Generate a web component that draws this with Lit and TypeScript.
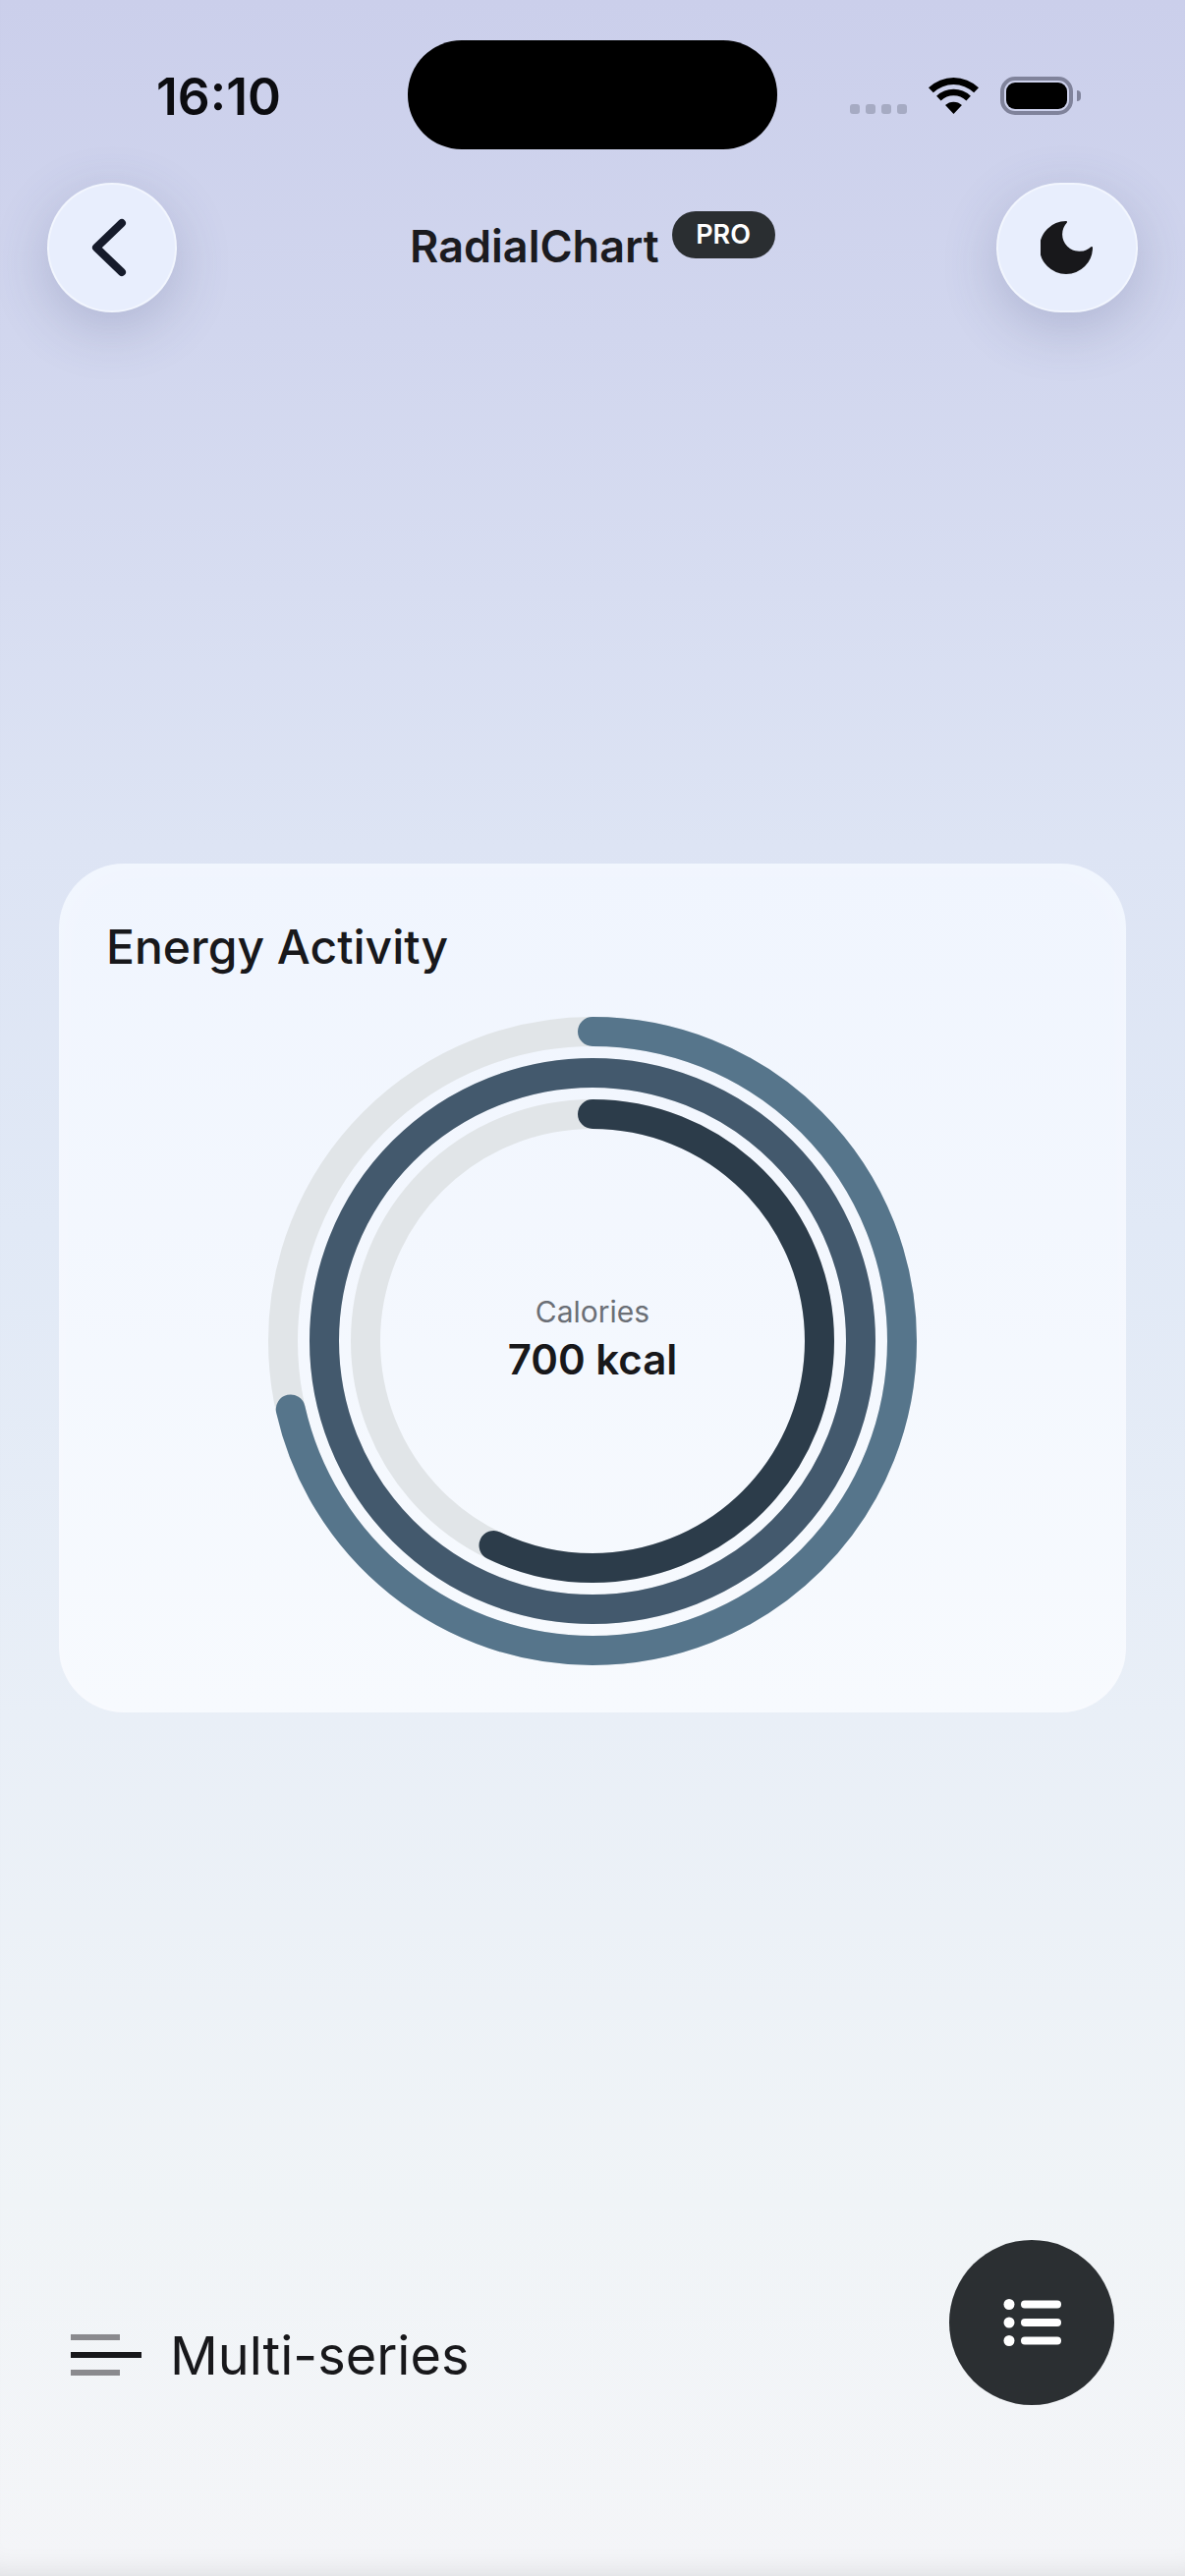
import { LitElement, html, css, svg } from "lit";
import { customElement } from "lit/decorators.js";

const CENTER = 330;
const STROKE = 30;
const TWO_PI = Math.PI * 2;

interface Ring {
  radius: number;
  fraction: number;
  color: string;
}

const RINGS: Ring[] = [
  { radius: 315, fraction: 5 / 7, color: "#56758b" },
  { radius: 273, fraction: 1, color: "#43596d" },
  { radius: 231, fraction: 4 / 7, color: "#2c3c4a" },
];

function ring(r: Ring) {
  const c = TWO_PI * r.radius;
  return svg`
    <circle class="track" cx=${CENTER} cy=${CENTER} r=${r.radius} stroke-width=${STROKE}></circle>
    <circle
      class="value"
      cx=${CENTER}
      cy=${CENTER}
      r=${r.radius}
      stroke=${r.color}
      stroke-width=${STROKE}
      stroke-dasharray="${c * r.fraction} ${c}"
      transform="rotate(-90 ${CENTER} ${CENTER})"
    ></circle>
  `;
}

@customElement("app-root")
export class AppRoot extends LitElement {
  static styles = css`
    :host {
      display: block;
      width: 1206px;
      font-family: Inter, "Liberation Sans", sans-serif;
      color: #18181b;
    }
    .page {
      width: 1206px;
      height: 2622px;
      overflow: hidden;
      display: flex;
      flex-direction: column;
      background: linear-gradient(
        180deg,
        #cbcfeb 0,
        #d1d6ee 340px,
        #dde4f4 860px,
        #e1e9f6 1250px,
        #e9eff7 1750px,
        #f0f4f7 2240px,
        #f4f5f8 2622px
      );
      box-shadow: inset 0 -26px 30px -26px rgba(0, 0, 0, 0.12);
    }

    /* status bar */
    .status {
      display: flex;
      height: 111px;
      margin-top: 41px;
      padding-left: 159px;
    }
    .time {
      width: 256px;
      font-size: 51.5px;
      font-weight: 600;
      line-height: 36px;
      padding-top: 39px;
      color: #0c0c10;
    }
    .island {
      width: 376px;
      height: 111px;
      border-radius: 55px;
      background: #000;
    }
    .signal {
      display: flex;
      gap: 6px;
      margin: 65px 0 0 74px;
      height: 10px;
    }
    .signal i {
      width: 10px;
      height: 10px;
      border-radius: 3px;
      background: #a6abc3;
    }
    .wifi {
      width: 51px;
      height: 37px;
      margin: 38px 0 0 22px;
    }
    .battery {
      display: flex;
      align-items: center;
      gap: 4px;
      margin: 37px 0 0 22px;
      height: 39px;
    }
    .shell {
      box-sizing: border-box;
      width: 74px;
      height: 39px;
      padding: 2px;
      border: 4px solid #80839b;
      border-radius: 15px;
    }
    .shell b {
      display: block;
      height: 100%;
      border-radius: 9px;
      background: #000;
    }
    .cap {
      width: 4px;
      height: 11px;
      border-radius: 0 6px 6px 0;
      background: #80839b;
    }

    /* header */
    .header {
      display: flex;
      align-items: flex-start;
      height: 132px;
      margin-top: 34px;
      padding: 0 48px;
    }
    .round {
      box-sizing: border-box;
      flex: none;
      display: flex;
      align-items: center;
      justify-content: center;
      height: 132px;
      border: 2px solid rgba(255, 255, 255, 0.45);
      border-radius: 66px;
      background: #e8eefd;
      box-shadow: 0 16px 56px rgba(70, 80, 125, 0.24);
    }
    .back {
      width: 132px;
    }
    .back svg {
      width: 44px;
      height: 60px;
      margin-right: 6px;
    }
    .moon {
      width: 144px;
    }
    .moon svg {
      width: 54px;
      height: 56px;
    }
    .title-group {
      display: flex;
      flex: 1;
      align-items: flex-start;
      padding-left: 237px;
    }
    .title {
      font-size: 45px;
      font-weight: 600;
      line-height: 54px;
      margin-top: 38px;
      color: #1b1b1f;
    }
    .pro {
      box-sizing: border-box;
      width: 105px;
      height: 48px;
      margin: 29px 0 0 13px;
      border-radius: 24px;
      background: #2a2e31;
      color: #fff;
      font-size: 27px;
      font-weight: 600;
      line-height: 48px;
      text-align: center;
    }

    /* card */
    .card {
      box-sizing: border-box;
      height: 864px;
      margin: 561px 60px 0;
      padding-top: 53px;
      border-radius: 66px;
      background: linear-gradient(180deg, #f0f5fe, #f7fafe);
      box-shadow: inset 0 0 50px rgba(255, 255, 255, 0.22);
    }
    .card h2 {
      margin: 0 0 0 48px;
      font-size: 48px;
      font-weight: 450;
      line-height: 64px;
      color: #18181b;
    }
    .chart {
      position: relative;
      width: 660px;
      height: 660px;
      margin: 39px auto 0;
    }
    .chart svg {
      display: block;
      width: 660px;
      height: 660px;
    }
    .track {
      fill: none;
      stroke: #e1e5e8;
    }
    .value {
      fill: none;
      stroke-linecap: round;
    }
    .center {
      position: absolute;
      inset: 0 0 4px;
      display: flex;
      flex-direction: column;
      align-items: center;
      justify-content: center;
      gap: 6px;
    }
    .center span {
      font-size: 30px;
      line-height: 36px;
      color: #6b6f76;
    }
    .center strong {
      font-size: 42px;
      font-weight: 600;
      line-height: 50px;
      color: #18181b;
    }

    /* footer */
    .footer {
      display: flex;
      justify-content: space-between;
      align-items: flex-start;
      margin-top: 537px;
      padding: 0 72px;
    }
    .legend {
      display: flex;
      align-items: center;
      gap: 29px;
      margin-top: 96px;
      height: 42px;
    }
    .bars {
      display: flex;
      flex-direction: column;
      gap: 12px;
      width: 72px;
    }
    .bars i {
      display: block;
      width: 50px;
      height: 6px;
      background: #8a8a8e;
    }
    .bars i.main {
      width: 72px;
      background: #18181b;
    }
    .legend span {
      font-size: 54px;
      line-height: 64px;
      padding-top: 2px;
      color: #18181b;
    }
    .fab {
      display: flex;
      align-items: center;
      justify-content: center;
      width: 168px;
      height: 168px;
      border-radius: 50%;
      background: #2b2f32;
    }
    .fab svg {
      width: 60px;
      height: 50px;
      margin-left: 2px;
    }
  `;

  render() {
    return html`
      <div class="page">
        <div class="status">
          <div class="time">16:10</div>
          <div class="island"></div>
          <div class="signal"><i></i><i></i><i></i><i></i></div>
          <svg class="wifi" viewBox="0 0 51 37" fill="#000">
            <path d="M0 10.2A37 37 0 0 1 51 10.2L46.15 15.24A30 30 0 0 0 4.85 15.24Z" />
            <path d="M8.1 18.65A25.3 25.3 0 0 1 42.9 18.65L38.4 23.4A18.8 18.8 0 0 0 12.6 23.4Z" />
            <path d="M17.04 28.1A12.3 12.3 0 0 1 33.96 28.1L25.5 37Z" />
          </svg>
          <div class="battery">
            <div class="shell"><b></b></div>
            <div class="cap"></div>
          </div>
        </div>

        <div class="header">
          <div class="round back">
            <svg viewBox="0 0 44 60" fill="none" stroke="#161b2b" stroke-width="8" stroke-linecap="round" stroke-linejoin="round">
              <path d="M35 5L9 30L35 55" />
            </svg>
          </div>
          <div class="title-group">
            <div class="title">RadialChart</div>
            <div class="pro">PRO</div>
          </div>
          <div class="round moon">
            <svg viewBox="0 0 54 56" fill="#18181b" stroke="#18181b" stroke-width="2" stroke-linejoin="round">
              <path d="M26 2A26 26 0 1 0 52 28A18.4 18.4 0 0 1 26 2Z" />
            </svg>
          </div>
        </div>

        <section class="card">
          <h2>Energy Activity</h2>
          <div class="chart">
            <svg viewBox="0 0 660 660">${RINGS.map(ring)}</svg>
            <div class="center">
              <span>Calories</span>
              <strong>700 kcal</strong>
            </div>
          </div>
        </section>

        <div class="footer">
          <div class="legend">
            <div class="bars"><i></i><i class="main"></i><i></i></div>
            <span>Multi-series</span>
          </div>
          <div class="fab">
            <svg viewBox="0 0 60 50" fill="#fff">
              <circle cx="6" cy="6.5" r="5.5" />
              <circle cx="6" cy="25" r="5.5" />
              <circle cx="6" cy="43.5" r="5.5" />
              <rect x="18" y="2.5" width="41" height="8" rx="4" />
              <rect x="18" y="21" width="41" height="8" rx="4" />
              <rect x="18" y="39.5" width="41" height="8" rx="4" />
            </svg>
          </div>
        </div>
      </div>
    `;
  }
}
